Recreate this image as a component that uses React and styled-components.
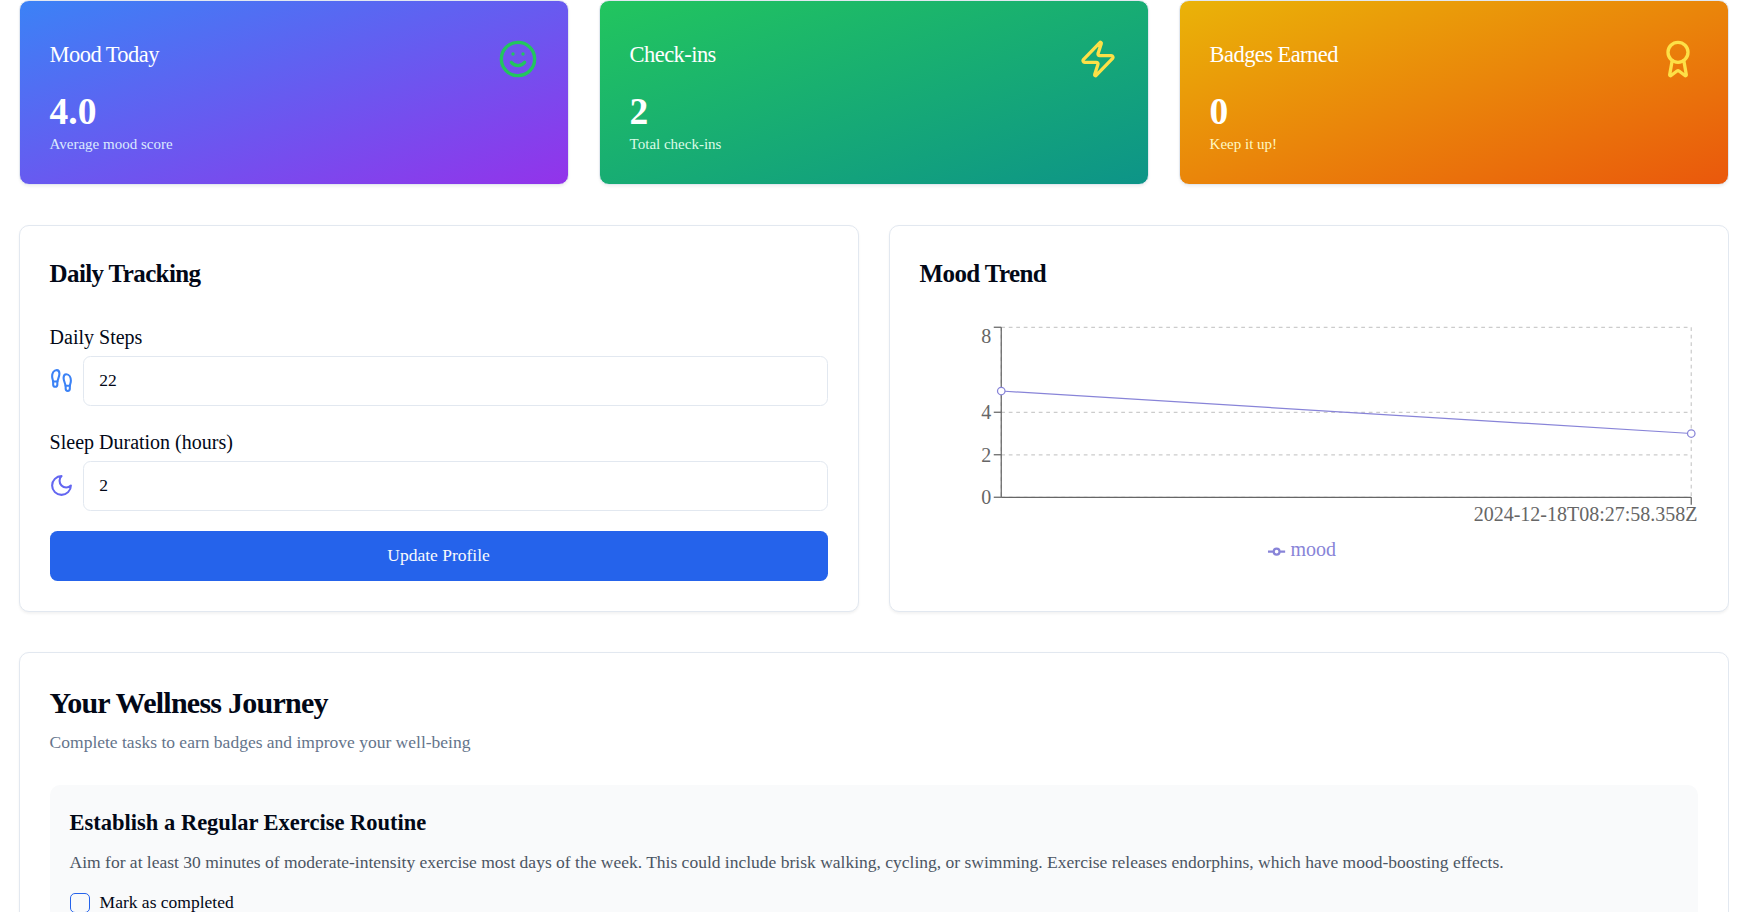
import React from "react";
import styled, { createGlobalStyle } from "styled-components";
import { Smile, Zap, Award, Footprints } from "lucide-react";

const GlobalStyle = createGlobalStyle`
  *, *::before, *::after { box-sizing: border-box; }
  body {
    margin: 0;
    overflow: hidden;
    background: #fff;
    color: #020817;
    font-family: "Liberation Serif", "Times New Roman", serif;
  }
  h2, h3, p { margin: 0; }
`;

const Page = styled.main`
  display: flex;
  flex-direction: column;
  gap: 40px;
  width: 1728.6px;
  height: 912px;
  padding-left: 18.6px;
  overflow: hidden;
`;

const StatGrid = styled.section`
  display: grid;
  grid-template-columns: repeat(3, 1fr);
  gap: 30px;
  flex: none;
`;

const PanelGrid = styled.section`
  display: grid;
  grid-template-columns: repeat(2, 1fr);
  gap: 30px;
  flex: none;
`;

const Card = styled.article`
  border: 1px solid #e2e8f0;
  border-radius: 10px;
  background: #fff;
  padding: 30px;
  box-shadow: 0 1.25px 2.5px rgba(0, 0, 0, 0.05);
`;

const StatCard = styled(Card)`
  height: 185px;
  padding-top: 38px;
  color: #fff;
  background: linear-gradient(to bottom right, ${(p) => p.$from}, ${(p) => p.$to});
`;

const StatHeader = styled.header`
  display: flex;
  justify-content: space-between;
  height: 40px;
  margin-bottom: 10px;
`;

const StatTitle = styled.h3`
  font-size: 22.5px;
  font-weight: 400;
  line-height: 32px;
  letter-spacing: -0.025em;
`;

const StatValue = styled.p`
  font-size: 37.5px;
  font-weight: 700;
  line-height: 45px;
`;

const StatNote = styled.p`
  font-size: 15px;
  line-height: 20px;
  color: ${(p) => p.$color};
`;

const PanelTitle = styled.h2`
  font-size: 25px;
  font-weight: 700;
  line-height: 35px;
  letter-spacing: -0.025em;
  margin-bottom: 30px;
`;

const Form = styled.form`
  display: flex;
  flex-direction: column;
  gap: 20px;
`;

const Field = styled.label`
  display: flex;
  flex-direction: column;
  gap: 3px;
  font-size: 20px;
  line-height: 32px;
`;

const InputRow = styled.div`
  display: flex;
  align-items: center;
  gap: 8.75px;

  svg {
    flex: none;
    margin: 0 0.75px 2px -0.75px;
  }
`;

const Input = styled.input`
  flex: 1;
  min-width: 0;
  height: 50px;
  padding: 0 15px 2px;
  border: 1px solid #e2e8f0;
  border-radius: 7.5px;
  background: #fff;
  color: inherit;
  font: 17.5px "Liberation Serif", serif;
  outline: none;
`;

const SubmitButton = styled.button`
  height: 50px;
  padding: 0 0 2px;
  border: 0;
  border-radius: 7.5px;
  background: #2563eb;
  color: #f8fafc;
  font: 17.5px "Liberation Serif", serif;
`;

const Chart = styled.svg`
  display: block;
  overflow: visible;
  font-size: 16px;
`;

const JourneyCard = styled(Card)`
  flex: none;
  height: 400px;
`;

const JourneyTitle = styled.h2`
  font-size: 30px;
  font-weight: 700;
  line-height: 39px;
  letter-spacing: -0.025em;
`;

const JourneyIntro = styled.p`
  margin-top: 8px;
  font-size: 17.5px;
  line-height: 25px;
  color: #64748b;
`;

const Task = styled.article`
  margin-top: 30px;
  padding: 20px;
  border-radius: 10px;
  background: #f9fafb;
`;

const TaskTitle = styled.h3`
  font-size: 22.5px;
  font-weight: 700;
  line-height: 35px;
`;

const TaskText = styled.p`
  margin-top: 10px;
  font-size: 17.5px;
  line-height: 25px;
  color: #4b5563;
`;

const TaskCheck = styled.label`
  display: flex;
  align-items: center;
  gap: 10px;
  margin-top: 15px;
  font-size: 17.5px;
  line-height: 25px;
`;

const Checkbox = styled.input`
  appearance: none;
  width: 20px;
  height: 20px;
  margin: 0;
  border: 1px solid #2563eb;
  border-radius: 5px;
`;

function Moon({ size, color }) {
  return (
    <svg
      width={size}
      height={size}
      viewBox="0 0 24 24"
      fill="none"
      stroke={color}
      strokeWidth="2"
      strokeLinecap="round"
      strokeLinejoin="round"
    >
      <path d="M12 3a6 6 0 0 0 9 9 9 9 0 1 1-9-9Z" />
    </svg>
  );
}

const stats = [
  { title: "Mood Today", value: "4.0", note: "Average mood score", from: "#3b82f6", to: "#9333ea", noteColor: "#dbeafe", Icon: Smile, iconColor: "#22c55e" },
  { title: "Check-ins", value: "2", note: "Total check-ins", from: "#22c55e", to: "#0d9488", noteColor: "#dcfce7", Icon: Zap, iconColor: "#fde047" },
  { title: "Badges Earned", value: "0", note: "Keep it up!", from: "#eab308", to: "#ea580c", noteColor: "#fef9c3", Icon: Award, iconColor: "#fde047" },
];

const fields = [
  { label: "Daily Steps", value: "22", Icon: Footprints, color: "#3b82f6" },
  { label: "Sleep Duration (hours)", value: "2", Icon: Moon, color: "#6366f1" },
];

const ticks = [
  { label: "0", y: 141, textY: 141 },
  { label: "2", y: 107, textY: 107.3 },
  { label: "4", y: 73, textY: 73 },
  { label: "8", y: 5, textY: 12.3 },
];

function MoodChart() {
  return (
    <Chart width="777.5" height="250" viewBox="0 0 622 200">
      <g stroke="#ccc" strokeDasharray="3 3">
        {ticks.map((t) => (
          <line key={t.label} x1="65" x2="617" y1={t.y} y2={t.y} />
        ))}
        <line x1="65" x2="65" y1="5" y2="141" />
        <line x1="617" x2="617" y1="5" y2="141" />
      </g>
      <g stroke="#666">
        <line x1="65" x2="617" y1="141" y2="141" />
        <line x1="65" x2="65" y1="5" y2="141" />
        <line x1="617" x2="617" y1="141" y2="147" />
        {ticks.map((t) => (
          <line key={t.label} x1="59" x2="65" y1={t.y} y2={t.y} />
        ))}
      </g>
      <g fill="#666" textAnchor="end">
        {ticks.map((t) => (
          <text key={t.label} x="57" y={t.textY} dy="0.355em">{t.label}</text>
        ))}
        <text x="622" y="160.3">2024-12-18T08:27:58.358Z</text>
      </g>
      <g stroke="#8884d8" fill="#fff">
        <path d="M65 56L617 90" fill="none" />
        <circle cx="65" cy="56" r="3" />
        <circle cx="617" cy="90" r="3" />
      </g>
      <svg x="278.3" y="177.5" width="14" height="14" viewBox="0 0 32 32">
        <path
          d="M0 16h10.667A5.333 5.333 0 1 1 21.333 16H32M21.333 16A5.333 5.333 0 1 1 10.667 16"
          fill="none"
          stroke="#8884d8"
          strokeWidth="4"
        />
      </svg>
      <text x="296.3" y="188.3" fill="#8884d8">mood</text>
    </Chart>
  );
}

export default function App() {
  return (
    <>
      <GlobalStyle />
      <Page>
        <StatGrid>
          {stats.map(({ title, value, note, from, to, noteColor, Icon, iconColor }) => (
            <StatCard key={title} $from={from} $to={to}>
              <StatHeader>
                <StatTitle>{title}</StatTitle>
                <Icon size={40} color={iconColor} />
              </StatHeader>
              <StatValue>{value}</StatValue>
              <StatNote $color={noteColor}>{note}</StatNote>
            </StatCard>
          ))}
        </StatGrid>
        <PanelGrid>
          <Card>
            <PanelTitle>Daily Tracking</PanelTitle>
            <Form>
              {fields.map(({ label, value, Icon, color }) => (
                <Field key={label}>
                  {label}
                  <InputRow>
                    <Icon size={25} color={color} />
                    <Input defaultValue={value} />
                  </InputRow>
                </Field>
              ))}
              <SubmitButton type="button">Update Profile</SubmitButton>
            </Form>
          </Card>
          <Card>
            <PanelTitle>Mood Trend</PanelTitle>
            <MoodChart />
          </Card>
        </PanelGrid>
        <JourneyCard>
          <JourneyTitle>Your Wellness Journey</JourneyTitle>
          <JourneyIntro>Complete tasks to earn badges and improve your well-being</JourneyIntro>
          <Task>
            <TaskTitle>Establish a Regular Exercise Routine</TaskTitle>
            <TaskText>
              Aim for at least 30 minutes of moderate-intensity exercise most days of the week. This could include
              brisk walking, cycling, or swimming. Exercise releases endorphins, which have mood-boosting effects.
            </TaskText>
            <TaskCheck>
              <Checkbox type="checkbox" />
              Mark as completed
            </TaskCheck>
          </Task>
        </JourneyCard>
      </Page>
    </>
  );
}
